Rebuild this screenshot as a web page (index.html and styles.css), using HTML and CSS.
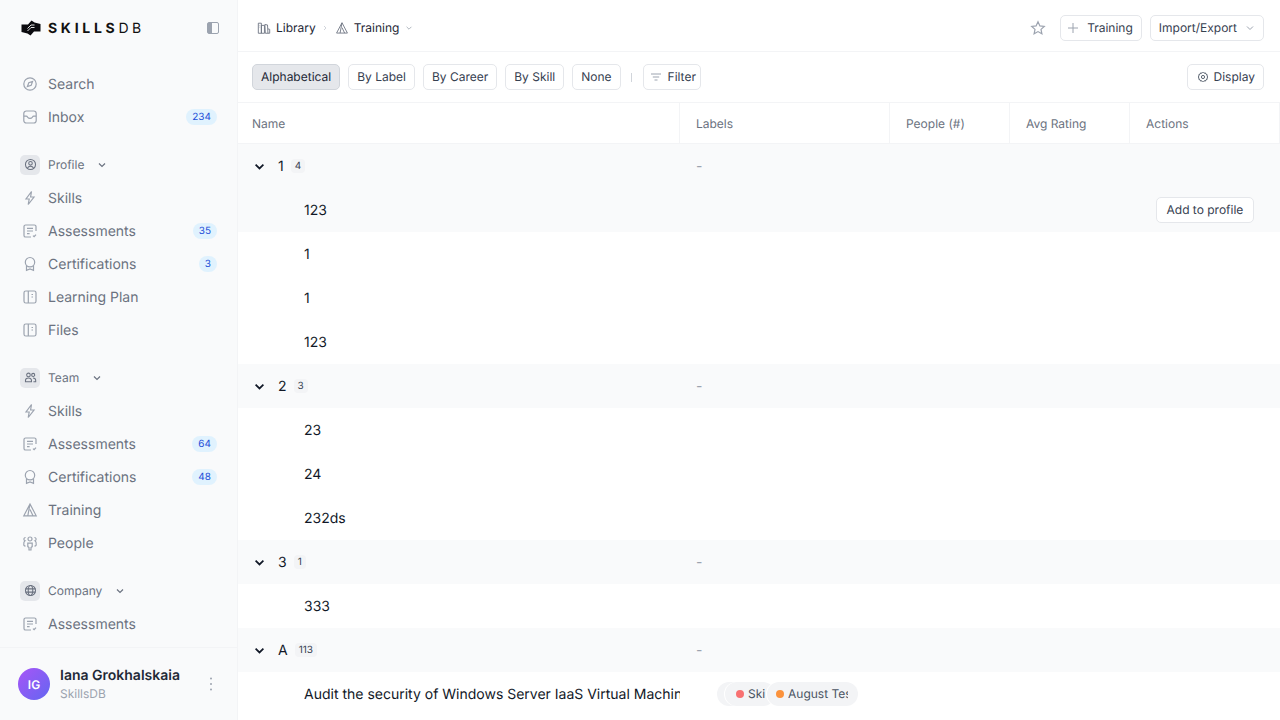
FILE: index.html
```html
<!DOCTYPE html>
<html lang="en">
<head>
  <meta charset="utf-8">
  <link rel="stylesheet" href="styles.css">
  <title>SkillsDB - Training</title>
</head>
<body>
  <svg class="sprites" width="0" height="0">
    <defs>
      <symbol id="i-compass" viewBox="0 0 16 16"><circle cx="8" cy="8" r="6.2"/><path d="M10.6 5.4 9.2 9.2 5.4 10.6 6.8 6.8Z"/></symbol>
      <symbol id="i-inbox" viewBox="0 0 16 16"><rect x="1.800" y="2" width="12.400" height="12" rx="2.500"/><path d="M1.800 7.200h2.400c.9 0 1.200.6 1.600 1.200.5.700 1.100 1 2.200 1s1.700-.3 2.200-1c.4-.6.7-1.200 1.600-1.200h2.400"/></symbol>
      <symbol id="i-bolt" viewBox="0 0 16 16"><path d="M9.500 1.500 4 9h3.200l-1 5.500L12 7H8.600Z"/></symbol>
      <symbol id="i-assess" viewBox="0 0 16 16"><path d="M14 8V3.600A1.600 1.600 0 0 0 12.400 2H3.600A1.600 1.600 0 0 0 2 3.600v8.800A1.600 1.600 0 0 0 3.600 14H9"/><path d="M5 5.400h6M5 8h6M5 10.600h2.600M11 12.600l1.100 1.100 1.900-2.100"/></symbol>
      <symbol id="i-cert" viewBox="0 0 16 16"><circle cx="8" cy="6.200" r="4.700"/><path d="M4.500 9.500v4.800L8 13l3.500 1.300V9.500"/></symbol>
      <symbol id="i-book" viewBox="0 0 16 16"><rect x="2" y="2" width="12" height="12" rx="1.800"/><path d="M6.300 2v12M9.500 5.500h1.500M9.500 8h1.500"/></symbol>
      <symbol id="i-user" viewBox="0 0 16 16"><circle cx="8" cy="8" r="6.200"/><circle cx="8" cy="6.600" r="2.200"/><path d="M4.200 12.600c.8-1.700 2.200-2.400 3.800-2.400s3 .7 3.800 2.400"/></symbol>
      <symbol id="i-team" viewBox="0 0 16 16"><circle cx="5.500" cy="4.800" r="2.200"/><circle cx="11.300" cy="4.800" r="1.900"/><path d="M1.800 13.200v-1.500c0-1.900 1.500-3.200 3.700-3.200s3.700 1.300 3.700 3.200v1.500ZM11 8.600c2 0 3.400 1.200 3.400 3v1.600h-2.800"/></symbol>
      <symbol id="i-train" viewBox="0 0 16 16"><path d="M8 2 1.800 13.800h12.400ZM8 2 5.800 13.800M8 7.500l3 6.300"/></symbol>
      <symbol id="i-people" viewBox="0 0 16 16"><circle cx="8" cy="4" r="2"/><path d="M5.800 8.200h4.400v3.400L9 12.500V15H7v-2.500l-1.200-.9ZM3.600 2.500A1.700 1.700 0 0 0 3 5.800C1.800 6.500 1.600 8 1.800 10c.4 1 1 1 1.700 1.200M12.400 2.500a1.700 1.700 0 0 1 .6 3.300c1.200.7 1.400 2.200 1.200 4.200-.4 1-1 1-1.700 1.200"/></symbol>
      <symbol id="i-globe" viewBox="0 0 16 16"><circle cx="8" cy="8" r="6.200"/><ellipse cx="8" cy="8" rx="2.800" ry="6.200"/><path d="M2 6h12M2 10h12"/></symbol>
      <symbol id="i-chev" viewBox="0 0 10 10"><path d="M2 3.500 5 6.500 8 3.500"/></symbol>
    </defs>
  </svg>

  <div class="app">
    <aside class="sidebar">
      <div class="brand">
        <svg class="brand-mark" width="20" height="16" viewBox="0 0 20 16"><path d="M.5 4.500H7L10.500.5 13.500 2.500 19.500 4V11.500H13L9.500 15.500 6.500 13.500.5 12Z"/><path class="brand-slit" d="M6.500 11 10 7.500H13.500M6.500 8.500 10 5H13.500"/></svg>
        <span class="brand-name">SKILLS<span class="brand-db">DB</span></span>
        <svg class="collapse" width="12" height="12" viewBox="0 0 12 12"><rect x=".5" y=".5" width="11" height="11" rx="1.500" class="collapse-box"/><path d="M1 1h4v10H1Z" class="collapse-fill"/></svg>
      </div>

      <nav class="nav">
        <div class="nav-group">
          <a class="nav-item"><svg class="nav-icon"><use href="#i-compass"/></svg>Search</a>
          <a class="nav-item"><svg class="nav-icon"><use href="#i-inbox"/></svg>Inbox<span class="count">234</span></a>
        </div>
        <div class="nav-group">
          <div class="nav-head"><span class="head-icon"><svg><use href="#i-user"/></svg></span>Profile<svg class="head-chev"><use href="#i-chev"/></svg></div>
          <a class="nav-item"><svg class="nav-icon"><use href="#i-bolt"/></svg>Skills</a>
          <a class="nav-item"><svg class="nav-icon"><use href="#i-assess"/></svg>Assessments<span class="count">35</span></a>
          <a class="nav-item"><svg class="nav-icon"><use href="#i-cert"/></svg>Certifications<span class="count">3</span></a>
          <a class="nav-item"><svg class="nav-icon"><use href="#i-book"/></svg>Learning Plan</a>
          <a class="nav-item"><svg class="nav-icon"><use href="#i-book"/></svg>Files</a>
        </div>
        <div class="nav-group">
          <div class="nav-head"><span class="head-icon"><svg><use href="#i-team"/></svg></span>Team<svg class="head-chev"><use href="#i-chev"/></svg></div>
          <a class="nav-item"><svg class="nav-icon"><use href="#i-bolt"/></svg>Skills</a>
          <a class="nav-item"><svg class="nav-icon"><use href="#i-assess"/></svg>Assessments<span class="count">64</span></a>
          <a class="nav-item"><svg class="nav-icon"><use href="#i-cert"/></svg>Certifications<span class="count">48</span></a>
          <a class="nav-item"><svg class="nav-icon"><use href="#i-train"/></svg>Training</a>
          <a class="nav-item"><svg class="nav-icon"><use href="#i-people"/></svg>People</a>
        </div>
        <div class="nav-group">
          <div class="nav-head"><span class="head-icon"><svg><use href="#i-globe"/></svg></span>Company<svg class="head-chev"><use href="#i-chev"/></svg></div>
          <a class="nav-item"><svg class="nav-icon"><use href="#i-assess"/></svg>Assessments</a>
        </div>
      </nav>

      <div class="me">
        <div class="avatar">IG</div>
        <div class="me-text">
          <div class="me-name">Iana Grokhalskaia</div>
          <div class="me-org">SkillsDB</div>
        </div>
        <svg class="me-more" width="4" height="14" viewBox="0 0 4 14"><circle cx="2" cy="1.500" r="1"/><circle cx="2" cy="7" r="1"/><circle cx="2" cy="12.500" r="1"/></svg>
      </div>
    </aside>

    <main class="main">
      <header class="topbar">
        <div class="crumb"><svg class="crumb-icon" viewBox="0 0 16 16"><path d="M1.500 2.500h3.500V14H1.500ZM5 5h3.500v9H5ZM9 4l3 .5.500 9.500H9.500ZM12.500 9l2 .5v4.500h-2M3 5h.6M3 7h.6"/></svg>Library</div>
        <svg class="crumb-sep" viewBox="0 0 10 10"><path d="M4 3 6 5 4 7"/></svg>
        <div class="crumb"><svg class="crumb-icon dark"><use href="#i-train"/></svg>Training</div>
        <svg class="crumb-chev"><use href="#i-chev"/></svg>
        <div class="top-right">
          <svg class="star" width="16" height="16" viewBox="0 0 16 16"><path d="M8 1.800 9.900 5.900 14.300 6.400 11 9.400 11.900 13.800 8 11.600 4.100 13.800 5 9.400 1.700 6.400 6.100 5.900Z"/></svg>
          <button class="btn btn-top btn-new"><svg class="plus" width="12" height="12" viewBox="0 0 12 12"><path d="M6 1v10M1 6h10"/></svg>Training</button>
          <button class="btn btn-top btn-import">Import/Export<svg class="import-chev"><use href="#i-chev"/></svg></button>
        </div>
      </header>

      <div class="toolbar">
        <button class="btn active">Alphabetical</button>
        <button class="btn">By Label</button>
        <button class="btn">By Career</button>
        <button class="btn">By Skill</button>
        <button class="btn">None</button>
        <span class="tool-sep"></span>
        <button class="btn btn-filter"><svg class="filter-icon" width="12" height="12" viewBox="0 0 12 12"><path d="M1 3h10M2.800 6h6.400M4.500 9h3"/></svg>Filter</button>
        <button class="btn btn-display"><svg class="gear" width="12" height="12" viewBox="0 0 12 12"><path d="M6 1.200 7 2.200 8.400 1.900 8.900 3.100 10.200 3.700 10 5 10.800 6 10 7 10.200 8.300 8.900 8.900 8.400 10.100 7 9.800 6 10.800 5 9.800 3.600 10.100 3.100 8.900 1.800 8.300 2 7 1.200 6 2 5 1.800 3.700 3.100 3.100 3.600 1.900 5 2.200Z"/><circle cx="6" cy="6" r="1.600"/></svg>Display</button>
      </div>

      <div class="table">
        <div class="row thead">
          <div class="cell">Name</div>
          <div class="cell">Labels</div>
          <div class="cell">People (#)</div>
          <div class="cell">Avg Rating</div>
          <div class="cell">Actions</div>
        </div>

        <div class="row group">
          <div class="cell"><svg class="group-chev"><use href="#i-chev"/></svg><span class="group-name">1</span><span class="group-count">4</span></div>
          <div class="cell dash">-</div>
        </div>
        <div class="row item hovered">
          <div class="cell">123</div><div class="cell"></div><div class="cell"></div><div class="cell"></div>
          <div class="cell"><button class="btn btn-add">Add to profile</button></div>
        </div>
        <div class="row item"><div class="cell">1</div></div>
        <div class="row item"><div class="cell">1</div></div>
        <div class="row item"><div class="cell">123</div></div>

        <div class="row group">
          <div class="cell"><svg class="group-chev"><use href="#i-chev"/></svg><span class="group-name">2</span><span class="group-count">3</span></div>
          <div class="cell dash">-</div>
        </div>
        <div class="row item"><div class="cell">23</div></div>
        <div class="row item"><div class="cell">24</div></div>
        <div class="row item"><div class="cell">232ds</div></div>

        <div class="row group">
          <div class="cell"><svg class="group-chev"><use href="#i-chev"/></svg><span class="group-name">3</span><span class="group-count">1</span></div>
          <div class="cell dash">-</div>
        </div>
        <div class="row item"><div class="cell">333</div></div>

        <div class="row group">
          <div class="cell"><svg class="group-chev"><use href="#i-chev"/></svg><span class="group-name">A</span><span class="group-count">113</span></div>
          <div class="cell dash">-</div>
        </div>
        <div class="row item">
          <div class="cell"><span class="item-clip">Audit the security of Windows Server IaaS Virtual Machines</span></div>
          <div class="cell labels">
            <span class="label label-blank"></span>
            <span class="label label-a"><i class="dot red"></i><span class="label-text">Skills</span></span>
            <span class="label label-b"><i class="dot orange"></i><span class="label-text">August Test</span></span>
          </div>
        </div>
      </div>
    </main>
  </div>
</body>
</html>
```
FILE: styles.css
```css
* {
  box-sizing: border-box;
}

body {
  margin: 0;
  height: 720px;
  overflow: hidden;
  background-color: #fff;
  color: #111827;
  font-family: Inter, "Liberation Sans", sans-serif;
  font-size: 14px;
  text-rendering: geometricPrecision;
}

button {
  font-family: inherit;
  text-rendering: inherit;
}

svg {
  display: block;
  flex: none;
}

.sprites {
  position: absolute;
}

.app {
  display: flex;
  height: 720px;
}

/* sidebar */
.sidebar {
  display: flex;
  flex-direction: column;
  width: 238px;
  flex: none;
  background-color: #f9fafb;
  border-right: 1px solid #f3f4f6;
}

.brand {
  display: flex;
  align-items: center;
  height: 56px;
  flex: none;
  padding: 0 18px 0 21px;
}

.brand-mark {
  fill: #0b0b0f;
}

.brand-slit {
  fill: none;
  stroke: #f9fafb;
  stroke-width: .9;
}

.brand-name {
  margin-left: 7px;
  font-size: 14px;
  font-weight: 700;
  letter-spacing: 3.7px;
  color: #111;
}

.brand-db {
  font-weight: 400;
  letter-spacing: 3.5px;
}

.collapse {
  margin-left: auto;
}

.collapse-box {
  fill: none;
  stroke: #9ca3af;
}

.collapse-fill {
  fill: #9ca3af;
}

.nav {
  flex: 1;
  min-height: 0;
  overflow: hidden;
  padding: 12px 20px 0 0;
}

.nav-group {
  margin-bottom: 15px;
}

.nav-item {
  display: flex;
  align-items: center;
  height: 33px;
  padding-left: 22px;
  color: #6b7280;
  font-size: 14px;
}

.nav-icon {
  width: 16px;
  height: 16px;
  margin-right: 10px;
  margin-top: -1px;
  fill: none;
  stroke: #9ca3af;
  stroke-width: 1.2;
}

.count {
  margin-left: auto;
  min-width: 18px;
  padding: 0 6px;
  height: 16px;
  margin-top: -1px;
  line-height: 16px;
  border-radius: 8px;
  background-color: #e0f2fe;
  color: #1d4ed8;
  font-size: 10px;
  text-align: center;
}

.nav-head {
  display: flex;
  align-items: center;
  height: 33px;
  padding: 0 0 2px 20px;
  color: #6b7280;
  font-size: 12px;
}

.head-icon {
  display: flex;
  align-items: center;
  justify-content: center;
  width: 20px;
  height: 20px;
  margin-right: 8px;
  border-radius: 5px;
  background-color: #e5e7eb;
}

.head-icon svg {
  width: 13px;
  height: 13px;
  fill: none;
  stroke: #6b7280;
  stroke-width: 1.300;
}

.head-chev {
  width: 10px;
  height: 10px;
  margin-left: 13px;
  fill: none;
  stroke: #6b7280;
  stroke-width: 1.200;
}

.me {
  display: flex;
  align-items: center;
  height: 73px;
  flex: none;
  padding: 0 24px 0 18px;
  border-top: 1px solid #f3f4f6;
}

.avatar {
  display: flex;
  align-items: center;
  justify-content: center;
  width: 32px;
  height: 32px;
  border-radius: 50%;
  background: linear-gradient(135deg, #a855f7, #6366f1);
  color: #fff;
  font-size: 12px;
  font-weight: 600;
}

.me-text {
  margin-left: 10px;
}

.me-name {
  color: #1f2937;
  font-size: 14px;
  font-weight: 600;
  line-height: 18px;
}

.me-org {
  color: #9ca3af;
  font-size: 12px;
  line-height: 17px;
}

.me-more {
  margin-left: auto;
  fill: #9ca3af;
}

/* top */
.main {
  flex: 1;
  min-width: 0;
  display: flex;
  flex-direction: column;
}

.topbar {
  display: flex;
  align-items: center;
  height: 52px;
  flex: none;
  padding: 5px 16px 0 19px;
  border-bottom: 1px solid #f3f4f6;
}

.crumb {
  display: flex;
  align-items: center;
  padding-bottom: 1px;
  color: #1f2937;
  font-size: 12px;
}

.crumb-icon {
  width: 14px;
  height: 14px;
  margin-right: 5px;
  fill: none;
  stroke: #6b7280;
  stroke-width: 1;
}

.crumb-sep {
  width: 10px;
  height: 10px;
  margin: 0 5px 0 4px;
  fill: none;
  stroke: #d1d5db;
}

.crumb-chev {
  width: 8px;
  height: 8px;
  margin-left: 6px;
  fill: none;
  stroke: #9ca3af;
}

.top-right {
  display: flex;
  align-items: center;
  margin-left: auto;
}

.star {
  margin-right: 14px;
  fill: none;
  stroke: #9ca3af;
  stroke-width: 1.200;
}

.btn {
  display: flex;
  align-items: center;
  height: 26px;
  padding: 0 8px 1px;
  border: 1px solid #e5e7eb;
  border-radius: 5px;
  background-color: #fff;
  color: #374151;
  font-size: 12px;
}

.btn-top {
  margin-right: 8px;
}

.btn-top:last-child {
  margin-right: 0;
}

.btn-new {
  padding-left: 6px;
}

.plus {
  margin-right: 8px;
  fill: none;
  stroke: #9ca3af;
  stroke-width: 1;
}

.import-chev {
  width: 10px;
  height: 10px;
  margin-left: 8px;
  fill: none;
  stroke: #9ca3af;
}

/* toolbar */
.toolbar {
  display: flex;
  align-items: center;
  gap: 8px;
  height: 51px;
  flex: none;
  padding: 0 16px 0 14px;
  border-bottom: 1px solid #f3f4f6;
}

.btn.active {
  background-color: #e5e7eb;
  border-color: #d1d5db;
  color: #1f2937;
}

.tool-sep {
  width: 1px;
  height: 9px;
  margin: 0 3px 0 2px;
  background-color: #d1d5db;
}

.btn-filter {
  padding: 0 4px 1px 6px;
}

.filter-icon {
  margin-right: 6px;
  fill: none;
  stroke: #9ca3af;
}

.btn-display {
  margin-left: auto;
  padding-left: 9px;
}

.gear {
  margin-right: 5px;
  fill: none;
  stroke: #4b5563;
  stroke-width: .9;
}

/* table */
.table {
  flex: 1;
  min-height: 0;
  overflow: hidden;
}

.row {
  display: grid;
  grid-template-columns: 442px 210px 120px 120px 150px;
  height: 44px;
  align-items: center;
}

.thead {
  height: 41px;
  border-bottom: 1px solid #f3f4f6;
  color: #6b7280;
  font-size: 12px;
}

.thead .cell {
  display: flex;
  align-items: center;
  height: 40px;
  padding-left: 16px;
  border-right: 1px solid #f3f4f6;
}

.thead .cell:first-child {
  padding-left: 14px;
}

.group {
  background-color: #f9fafb;
}

.group .cell:first-child {
  display: flex;
  align-items: center;
  padding-left: 15px;
}

.group-chev {
  width: 13px;
  height: 13px;
  margin-right: 12px;
  fill: none;
  stroke: #111827;
  stroke-width: 1.300;
}

.group-name {
  margin-right: 7px;
  color: #111827;
}

.group-count {
  padding: 0 4px;
  height: 14px;
  line-height: 14px;
  border-radius: 4px;
  background-color: #f3f4f6;
  color: #374151;
  font-size: 10px;
}

.dash {
  padding-left: 16px;
  color: #9ca3af;
}

.item .cell:first-child {
  padding-left: 66px;
  overflow: hidden;
  white-space: nowrap;
}

.item-clip {
  display: block;
  overflow: hidden;
}

.hovered {
  background-color: #f9fafb;
}

.btn-add {
  margin-left: 26px;
  padding: 0 9.5px 1px;
}

.labels {
  position: relative;
  height: 24px;
}

.label {
  position: absolute;
  top: 0;
  display: flex;
  align-items: center;
  height: 24px;
  padding-bottom: 1px;
  border-radius: 12px;
  background-color: #f3f4f6;
  box-shadow: -1px 0 0 #fff;
  color: #4b5563;
  font-size: 12px;
}

.label-blank {
  left: 37px;
  width: 30px;
}

.label-a {
  left: 45px;
  width: 50px;
  padding-left: 11px;
}

.label-b {
  left: 87px;
  width: 91px;
  padding-left: 9px;
}

.label-text {
  overflow: hidden;
  white-space: nowrap;
}

.label-a .label-text {
  width: 17px;
}

.label-b .label-text {
  width: 60px;
}

.dot {
  width: 8px;
  height: 8px;
  flex: none;
  margin-right: 4px;
  border-radius: 50%;
}

.red {
  background-color: #f87171;
}

.orange {
  background-color: #fb923c;
}
```
